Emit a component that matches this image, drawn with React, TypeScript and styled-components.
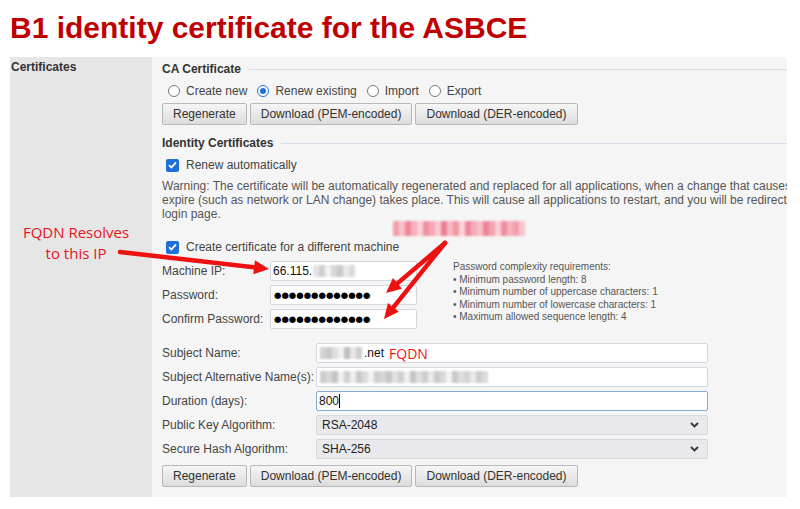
import React from "react";
import styled, { createGlobalStyle } from "styled-components";

const Global = createGlobalStyle`
  html, body { margin: 0; padding: 0; background: #fff; }
  body { width: 800px; height: 509px; overflow: hidden; font-family: "Liberation Sans", Arial, sans-serif; }
`;

const Page = styled.div`
  position: relative;
  width: 800px;
  height: 509px;
`;

const Title = styled.h1`
  margin: 0;
  box-sizing: border-box;
  height: 57px;
  padding: 3px 0 0 10px;
  font: bold 30px/50px "Liberation Sans", Arial, sans-serif;
  color: #c00000;
  white-space: nowrap;
`;

const Panel = styled.div`
  display: grid;
  grid-template-columns: 142px 635px;
  margin-left: 10px;
  height: 440px;
`;

const Side = styled.div`
  position: relative;
  background: #e6e6e6;
  padding: 3px 0 0 1px;
  font: bold 12px/14px "Liberation Sans", Arial, sans-serif;
  color: #333;
`;

const Content = styled.div`
  background: #f5f5f5;
  padding: 5px 0 10px 10px;
  overflow: hidden;
  min-width: 0;
  font: 12px/14px "Liberation Sans", Arial, sans-serif;
  color: #444;
`;

const SectionHeader = styled.div<{ $mt?: number }>`
  display: flex;
  align-items: center;
  gap: 8px;
  height: 14px;
  margin-top: ${(p) => p.$mt ?? 0}px;
  font-weight: bold;
  color: #333;
  white-space: nowrap;
  &::after {
    content: "";
    flex: 1;
    height: 1px;
    background: #d6dee9;
  }
`;

const RadioRow = styled.div`
  display: flex;
  align-items: center;
  height: 18px;
  margin-top: 6px;
  padding-left: 6px;
`;

const RadioItem = styled.label`
  display: flex;
  align-items: center;
  gap: 6px;
  margin-right: 10px;
  color: #444;
`;

const RadioCircle = styled.span<{ $on?: boolean }>`
  position: relative;
  box-sizing: border-box;
  width: 12px;
  height: 12px;
  border-radius: 50%;
  background: #fff;
  border: ${(p) => (p.$on ? "1.5px solid #1f6fd8" : "1px solid #777")};
  &::after {
    content: "";
    display: ${(p) => (p.$on ? "block" : "none")};
    position: absolute;
    left: 50%;
    top: 50%;
    width: 6px;
    height: 6px;
    margin: -3px 0 0 -3px;
    border-radius: 50%;
    background: #1f6fd8;
  }
`;

const ButtonRow = styled.div<{ $mt: number }>`
  display: flex;
  gap: 3px;
  margin-top: ${(p) => p.$mt}px;
`;

const Button = styled.button`
  box-sizing: border-box;
  height: 22px;
  padding: 0 10px;
  border: 1px solid #b8b8b8;
  border-radius: 2px;
  background: linear-gradient(#f6f6f6, #dcdcdc);
  font: 12px "Liberation Sans", Arial, sans-serif;
  color: #333;
`;

const CheckRow = styled.label<{ $mt: number }>`
  display: flex;
  align-items: center;
  gap: 7px;
  height: 16px;
  margin-top: ${(p) => p.$mt}px;
  padding-left: 4px;
  color: #444;
`;

const CheckBox = styled.span`
  display: flex;
  align-items: center;
  justify-content: center;
  width: 13px;
  height: 13px;
  border-radius: 2px;
  background: #1f6fd8;
`;

const Warning = styled.div`
  margin-top: 6px;
  color: #555;
  white-space: nowrap;
  line-height: 14px;
`;

const MachineRow = styled.div`
  display: flex;
  align-items: flex-start;
  margin-top: 6px;
`;

const FormGrid = styled.div<{ $label: number; $field: number }>`
  display: grid;
  grid-template-columns: ${(p) => p.$label}px ${(p) => p.$field}px;
  grid-auto-rows: 20px;
  row-gap: 4px;
  align-items: center;
`;

const Label = styled.span`
  color: #444;
  white-space: nowrap;
`;

const Field = styled.div<{ $focus?: boolean }>`
  box-sizing: border-box;
  display: flex;
  align-items: center;
  height: 20px;
  padding: 0 2px;
  background: #fff;
  border: 1px solid ${(p) => (p.$focus ? "#84aad8" : "#d2d6de")};
  border-radius: 2px;
  color: #111;
  white-space: nowrap;
  overflow: hidden;
`;

const Dots = styled.span`
  font: 8.5px/1 "DejaVu Sans", sans-serif;
  color: #000;
  padding-left: 1px;
`;

const Caret = styled.span`
  width: 1px;
  height: 14px;
  background: #000;
`;

const SelectBox = styled.div`
  box-sizing: border-box;
  display: flex;
  align-items: center;
  justify-content: space-between;
  height: 20px;
  padding: 0 8px 0 5px;
  background: #e9e9ed;
  border: 1px solid #dadade;
  border-radius: 2px;
  color: #222;
`;

const Complexity = styled.div`
  margin-left: 36px;
  font: 10px/12.5px "Liberation Sans", Arial, sans-serif;
  color: #555;
  white-space: nowrap;
`;

const SubjectGrid = styled(FormGrid)`
  margin-top: 14px;
`;

const Blur = styled.span`
  display: inline-flex;
  height: 12px;
  filter: blur(1px);
  margin: 0 2px 0 1px;
`;

const Cell = styled.span<{ $w: number }>`
  width: ${(p) => p.$w}px;
  height: 100%;
`;

const Note = styled.div`
  position: absolute;
  left: 0;
  top: 165px;
  width: 132px;
  text-align: center;
  font: 15px/21px "Open Sans", "Noto Sans", sans-serif;
  color: #e8141c;
  font-weight: normal;
`;

const InlineNote = styled.span`
  margin-left: 5px;
  font: 14px "Open Sans", "Noto Sans", sans-serif;
  color: #e8141c;
`;

const PinkSmudge = styled.div`
  position: absolute;
  left: 393px;
  top: 221px;
  width: 136px;
  height: 15px;
  display: flex;
  filter: blur(1.2px);
`;

const Overlay = styled.svg`
  position: absolute;
  left: 0;
  top: 0;
  pointer-events: none;
`;

function Pixels({ cells, w = 6 }: { cells: string[]; w?: number }) {
  return (
    <Blur>
      {cells.map((c, i) => (
        <Cell key={i} $w={w} style={{ background: c }} />
      ))}
    </Blur>
  );
}

function Check() {
  return (
    <CheckBox>
      <svg width="9" height="8" viewBox="0 0 9 8">
        <path d="M1 4.2 L3.4 6.5 L8 1.3" fill="none" stroke="#fff" strokeWidth="1.8" />
      </svg>
    </CheckBox>
  );
}

function Chevron() {
  return (
    <svg width="9" height="6" viewBox="0 0 9 6">
      <path d="M1 1 L4.5 4.5 L8 1" fill="none" stroke="#333" strokeWidth="1.8" />
    </svg>
  );
}

function Arrow({ x1, y1, x2, y2 }: { x1: number; y1: number; x2: number; y2: number }) {
  const dx = x2 - x1;
  const dy = y2 - y1;
  const len = Math.hypot(dx, dy);
  const ux = dx / len;
  const uy = dy / len;
  const hl = 15;
  const hw = 7;
  const bx = x2 - ux * hl;
  const by = y2 - uy * hl;
  const px = -uy;
  const py = ux;
  return (
    <g>
      <line x1={x1} y1={y1} x2={bx + ux * 2} y2={by + uy * 2} stroke="#ee1111" strokeWidth="4.5" strokeLinecap="round" />
      <polygon
        points={`${x2},${y2} ${bx + px * hw},${by + py * hw} ${bx - px * hw},${by - py * hw}`}
        fill="#ee1111"
      />
    </g>
  );
}

const ipCells = ["#e4e4e4", "#cfcfcf", "#f2f2f2", "#d6d6d6", "#c8c8c8", "#e8e8e8", "#dadada"];
const subjCells = ["#d2d2d2", "#c9c9c9", "#dedede", "#f0f0f0", "#bfbfbf", "#e6e6e6", "#cdcdcd"];
const sanCells = [
  "#cccccc", "#d8d8d8", "#c4c4c4", "#f0f0f0", "#d0d0d0", "#eeeeee", "#c8c8c8", "#dcdcdc",
  "#f2f2f2", "#cfcfcf", "#d6d6d6", "#c7c7c7", "#e2e2e2", "#d0d0d0", "#f0f0f0", "#c6c6c6",
  "#dedede", "#cfcfcf", "#eaeaea", "#cbcbcb", "#d9d9d9", "#f3f3f3", "#c9c9c9", "#dddddd",
  "#d4d4d4", "#e8e8e8", "#cdcdcd", "#dadada",
];
const pinkCells = [
  "#f3a0ad", "#f7c2cb", "#ee8798", "#f5b0bc", "#f9d0d7", "#ef92a2", "#f4a8b5", "#f8c8d0",
  "#ec7f91", "#f6b9c3", "#f1999f", "#f9d3d9", "#ee8a9b", "#f4acb8", "#f7bfc8", "#ed8597",
  "#f3a3b0", "#f9ced5", "#ef8f9f", "#f5b3be", "#f2a0ad", "#f8c5cd",
];

const DOTS = "\u25CF".repeat(13);

export default function App() {
  return (
    <Page>
      <Global />
      <Title>B1 identity certificate for the ASBCE</Title>
      <Panel>
        <Side>
          Certificates
          <Note>
            FQDN Resolves
            <br />
            to this IP
          </Note>
        </Side>
        <Content>
          <SectionHeader>CA Certificate</SectionHeader>
          <RadioRow>
            <RadioItem>
              <RadioCircle />
              Create new
            </RadioItem>
            <RadioItem>
              <RadioCircle $on />
              Renew existing
            </RadioItem>
            <RadioItem>
              <RadioCircle />
              Import
            </RadioItem>
            <RadioItem>
              <RadioCircle />
              Export
            </RadioItem>
          </RadioRow>
          <ButtonRow $mt={3}>
            <Button>Regenerate</Button>
            <Button>Download (PEM-encoded)</Button>
            <Button>Download (DER-encoded)</Button>
          </ButtonRow>

          <SectionHeader $mt={11}>Identity Certificates</SectionHeader>
          <CheckRow $mt={7}>
            <Check />
            Renew automatically
          </CheckRow>
          <Warning>
            Warning: The certificate will be automatically regenerated and replaced for all applications, when a change that causes the certificate to
            <br />
            expire (such as network or LAN change) takes place. This will cause all applications to restart, and you will be redirected to the
            <br />
            login page.
          </Warning>
          <CheckRow $mt={18}>
            <Check />
            Create certificate for a different machine
          </CheckRow>
          <MachineRow>
            <FormGrid $label={108} $field={147}>
              <Label>Machine IP:</Label>
              <Field>
                66.115.
                <Pixels cells={ipCells} />
              </Field>
              <Label>Password:</Label>
              <Field>
                <Dots>{DOTS}</Dots>
              </Field>
              <Label>Confirm Password:</Label>
              <Field>
                <Dots>{DOTS}</Dots>
              </Field>
            </FormGrid>
            <Complexity>
              Password complexity requirements:
              <br />• Minimum password length: 8
              <br />• Minimum number of uppercase characters: 1
              <br />• Minimum number of lowercase characters: 1
              <br />• Maximum allowed sequence length: 4
            </Complexity>
          </MachineRow>

          <SubjectGrid $label={154} $field={392}>
            <Label>Subject Name:</Label>
            <Field>
              <Pixels cells={subjCells} />
              .net
              <InlineNote>FQDN</InlineNote>
            </Field>
            <Label>Subject Alternative Name(s):</Label>
            <Field>
              <Pixels cells={sanCells} />
            </Field>
            <Label>Duration (days):</Label>
            <Field $focus>
              800
              <Caret />
            </Field>
            <Label>Public Key Algorithm:</Label>
            <SelectBox>
              RSA-2048
              <Chevron />
            </SelectBox>
            <Label>Secure Hash Algorithm:</Label>
            <SelectBox>
              SHA-256
              <Chevron />
            </SelectBox>
          </SubjectGrid>
          <ButtonRow $mt={6}>
            <Button>Regenerate</Button>
            <Button>Download (PEM-encoded)</Button>
            <Button>Download (DER-encoded)</Button>
          </ButtonRow>
        </Content>
      </Panel>

      <PinkSmudge>
        {pinkCells.map((c, i) => (
          <Cell key={i} $w={6} style={{ background: c }} />
        ))}
      </PinkSmudge>
      <Overlay width="800" height="509" viewBox="0 0 800 509">
        <Arrow x1={120} y1={252} x2={269} y2={269} />
        <Arrow x1={445} y1={243} x2={386} y2={293} />
        <Arrow x1={445} y1={243} x2={384} y2={319} />
      </Overlay>
    </Page>
  );
}
